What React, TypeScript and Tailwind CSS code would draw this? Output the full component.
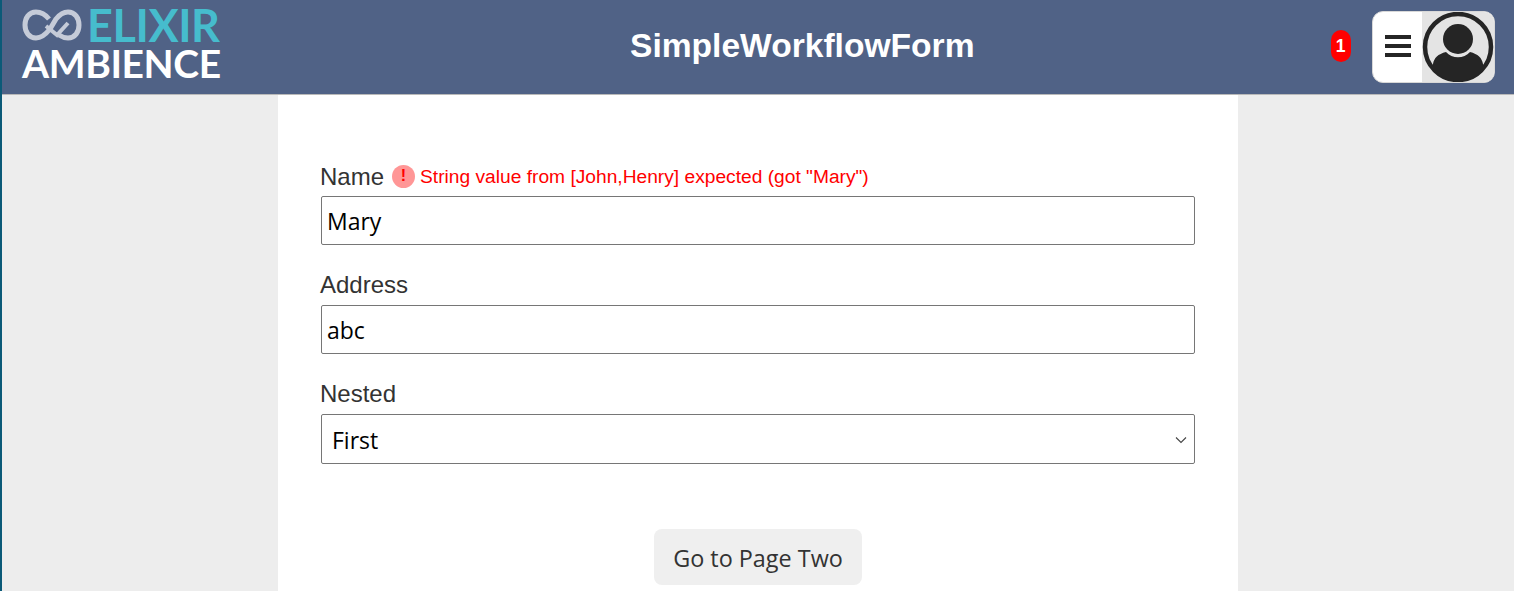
export default function App() {
  const arial = "[font-family:'Liberation_Sans',Arial,sans-serif]";
  return (
    <div className="flex h-[591px] w-[1514px] overflow-hidden bg-[#ededed]">
      <div className="w-[2px] shrink-0 bg-[#0b5a78]" />
      <div className="flex min-w-0 flex-1 flex-col">
        <header className="flex h-[95px] shrink-0 items-center border-b border-[#b9b9b9] bg-[#506286] pr-[19px] pl-[20px]">
          <div className="mb-[8px] flex w-[200px] flex-col">
            <div className="flex h-[38px] items-center">
              <svg width="60" height="36" viewBox="0 0 60 36" fill="none" stroke="#c5cbd8" strokeWidth="5" className="mr-[5px] shrink-0">
                <path d="M27 12 C23 7 19 5 14 5 C7 5 3 11 3 18 C3 25 7 31 14 31 C20 31 24 27 28 22 L34 12 C38 7 41 5 46 5 C53 5 57 11 57 18 C57 25 53 31 46 31 C42 31 40 30 37 28" />
                <path d="M24 19 L35 28 L46 16" strokeWidth="4" />
              </svg>
              <span className="font-['Lato',sans-serif] text-[45px] leading-[38px] font-bold tracking-[-0.4px] text-[#46bccd]">ELIXIR</span>
            </div>
            <span className="mt-[2px] font-['Lato',sans-serif] text-[39px] leading-[34px] font-bold tracking-[-0.4px] whitespace-nowrap text-white">AMBIENCE</span>
          </div>
          <h1 className={`${arial} mb-[2px] ml-[408px] flex-1 text-[33.6px] font-bold text-white`}>SimpleWorkflowForm</h1>
          <span className={`${arial} mr-[21px] mb-[2px] flex h-[32px] w-[20px] items-center justify-center rounded-[10px] bg-[#ff0000] pr-px text-[17.5px] font-bold text-white`}>1</span>
          <div className="flex h-[72px] w-[123px] overflow-hidden rounded-[11px] border border-[#d8d8d8] bg-white">
            <div className="flex w-[49px] items-center justify-center pb-[2px]">
              <div className="flex w-[26px] flex-col gap-[5px]">
                <div className="h-[4px] bg-[#252525]" />
                <div className="h-[4px] bg-[#252525]" />
                <div className="h-[4px] bg-[#252525]" />
              </div>
            </div>
            <div className="flex flex-1 items-center justify-center bg-[#e4e4e4]">
              <svg width="72" height="72" viewBox="0 0 72 72">
                <defs>
                  <clipPath id="c"><circle cx="36" cy="36" r="34" /></clipPath>
                </defs>
                <circle cx="36" cy="36" r="33" fill="none" stroke="#252525" strokeWidth="4.500" />
                <circle cx="36" cy="28" r="15" fill="#252525" />
                <path d="M11 72 L11 53 C12 47 16 43 24 41 C30 48 42 48 48 41 C56 43 60 47 61 53 L61 72 Z" fill="#252525" clipPath="url(#c)" />
              </svg>
            </div>
          </div>
        </header>
        <main className="ml-[276px] flex w-[960px] flex-1 flex-col bg-white pt-[67px] pr-[43px] pl-[43px]">
          <div className={`${arial} flex h-[28px] items-center pt-[2px] text-[24px] text-[#333333]`}>
            <span className="-ml-px">Name</span>
            <span className="mb-[2px] ml-[8px] flex h-[23px] w-[23px] items-center justify-center rounded-full bg-[#ff9696] text-[16px] leading-none font-bold text-[#ff0000]">!</span>
            <span className="ml-[5px] text-[19.2px] text-[#ff0000]">String value from [John,Henry] expected (got "Mary")</span>
          </div>
          <input readOnly value="Mary" className="mt-[6px] h-[49px] w-[874px] rounded-[2px] border border-[#767676] bg-white px-[5px] font-['Open_Sans',sans-serif] text-[23px] text-black" />
          <label className={`${arial} mt-[26px] -ml-px block h-[34px] text-[24px] leading-[28px] text-[#333333]`}>Address</label>
          <input readOnly value="abc" className="h-[49px] w-[874px] rounded-[2px] border border-[#767676] bg-white px-[5px] font-['Open_Sans',sans-serif] text-[23px] text-black" />
          <label className={`${arial} mt-[26px] -ml-px block h-[34px] text-[24px] leading-[28px] text-[#333333]`}>Nested</label>
          <div className="flex h-[50px] w-[874px] items-center justify-between rounded-[2px] border border-[#767676] bg-white pt-[2px] pr-[7px] pl-[10px] font-['Open_Sans',sans-serif] text-[23px] text-black">
            <span>First</span>
            <svg width="12" height="8" viewBox="0 0 12 8" fill="none" stroke="#444444" strokeWidth="1.100"><path d="M1 1.500 L6 6.500 L11 1.500" /></svg>
          </div>
          <div className="mt-[65px] flex w-[874px] justify-center">
            <button className="h-[56px] w-[208px] rounded-[8px] bg-[#efefef] pt-[3px] font-['Open_Sans',sans-serif] text-[23.4px] text-[#333333]">Go to Page Two</button>
          </div>
        </main>
      </div>
    </div>
  );
}
